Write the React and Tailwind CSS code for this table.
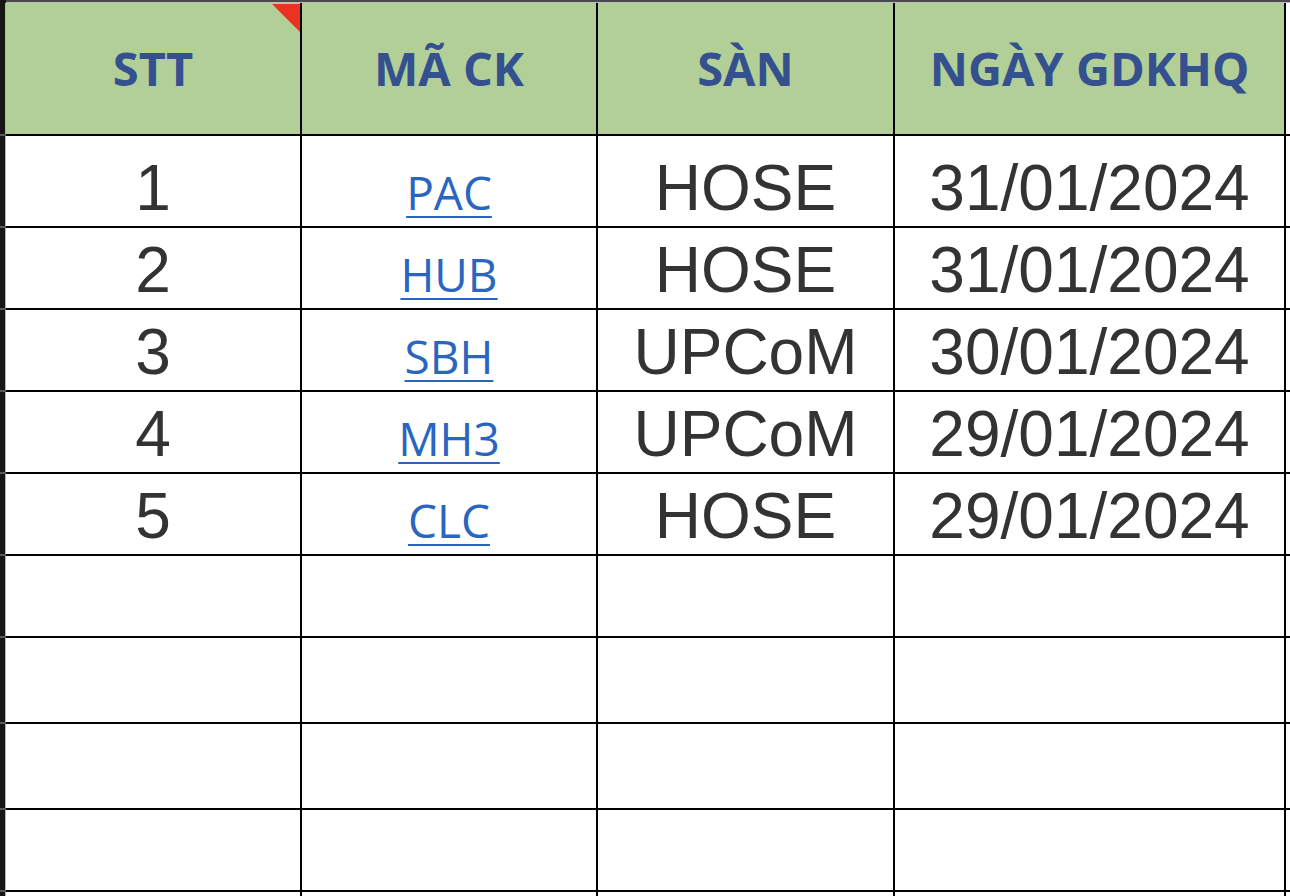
import React from "react";

const rows = [
  { stt: "1", ma: "PAC", san: "HOSE", ngay: "31/01/2024", h: "h-[92px]" },
  { stt: "2", ma: "HUB", san: "HOSE", ngay: "31/01/2024", h: "h-[82px]" },
  { stt: "3", ma: "SBH", san: "UPCoM", ngay: "30/01/2024", h: "h-[82px]" },
  { stt: "4", ma: "MH3", san: "UPCoM", ngay: "29/01/2024", h: "h-[82px]" },
  { stt: "5", ma: "CLC", san: "HOSE", ngay: "29/01/2024", h: "h-[82px]" },
  { h: "h-[82px]" },
  { h: "h-[86px]" },
  { h: "h-[86px]" },
  { h: "h-[82px]" },
  { h: "h-[82px]" },
];

const Gutter = () => (
  <div className="flex w-[6px] shrink-0 flex-col">
    <div className="flex flex-1">
      <div className="w-[5px] bg-[#161616]" />
      <div className="w-[1px] bg-[#b4b4b4]" />
    </div>
    <div className="h-[2px] bg-[#5a5a5a]" />
  </div>
);

const cellBase = "shrink-0 border-r-2 border-b-2 border-black flex justify-center";
const dataText = "font-['Liberation_Sans',Arial,sans-serif] text-[64px] leading-[64px] text-[#333333] items-end pb-[6px]";

const Row = ({ r }) => (
  <div className={`flex ${r.h}`}>
    <Gutter />
    <div className={`${cellBase} ${dataText} w-[296px]`}>{r.stt}</div>
    <div className={`${cellBase} w-[296px] items-end pb-[11px]`}>
      {r.ma && (
        <a
          href="#"
          className="font-['Open_Sans',sans-serif] text-[46px] font-medium leading-[46px] text-[#2a66c0] underline decoration-[2px] underline-offset-[6px]"
        >
          {r.ma}
        </a>
      )}
    </div>
    <div className={`${cellBase} ${dataText} w-[297px]`}>{r.san}</div>
    <div className={`${cellBase} ${dataText} w-[391px]`}>{r.ngay}</div>
    <div className="flex-1 border-b-2 border-black" />
  </div>
);

const headers = [
  { t: "STT", w: "w-[296px]", flag: true },
  { t: "MÃ CK", w: "w-[296px]" },
  { t: "SÀN", w: "w-[297px]" },
  { t: "NGÀY GDKHQ", w: "w-[391px]" },
];

export default function App() {
  return (
    <div className="h-[896px] w-[1290px] overflow-hidden bg-white">
      <div className="flex h-[3px]">
        <div className="w-[6px] bg-[#161616]" />
        <div className="flex-1 flex flex-col">
          <div className="h-[2px] bg-[#4a4a4a]" />
          <div className="h-[1px] bg-[#bdbdbd]" />
        </div>
      </div>
      <div className="flex h-[133px]">
        <Gutter />
        {headers.map((h) => (
          <div
            key={h.t}
            className={`${cellBase} ${h.w} relative items-center bg-[#b3cf98]`}
          >
            <span className="font-['Open_Sans',sans-serif] text-[47px] font-bold leading-[47px] text-[#34508f]">
              {h.t}
            </span>
            {h.flag && (
              <div className="absolute right-0 top-[1px] h-[28px] w-[28px] bg-[#ea3323] [clip-path:polygon(0_0,100%_0,100%_100%)]" />
            )}
          </div>
        ))}
        <div className="flex-1 border-b-2 border-black bg-white" />
      </div>
      {rows.map((r, i) => (
        <Row key={i} r={r} />
      ))}
    </div>
  );
}
